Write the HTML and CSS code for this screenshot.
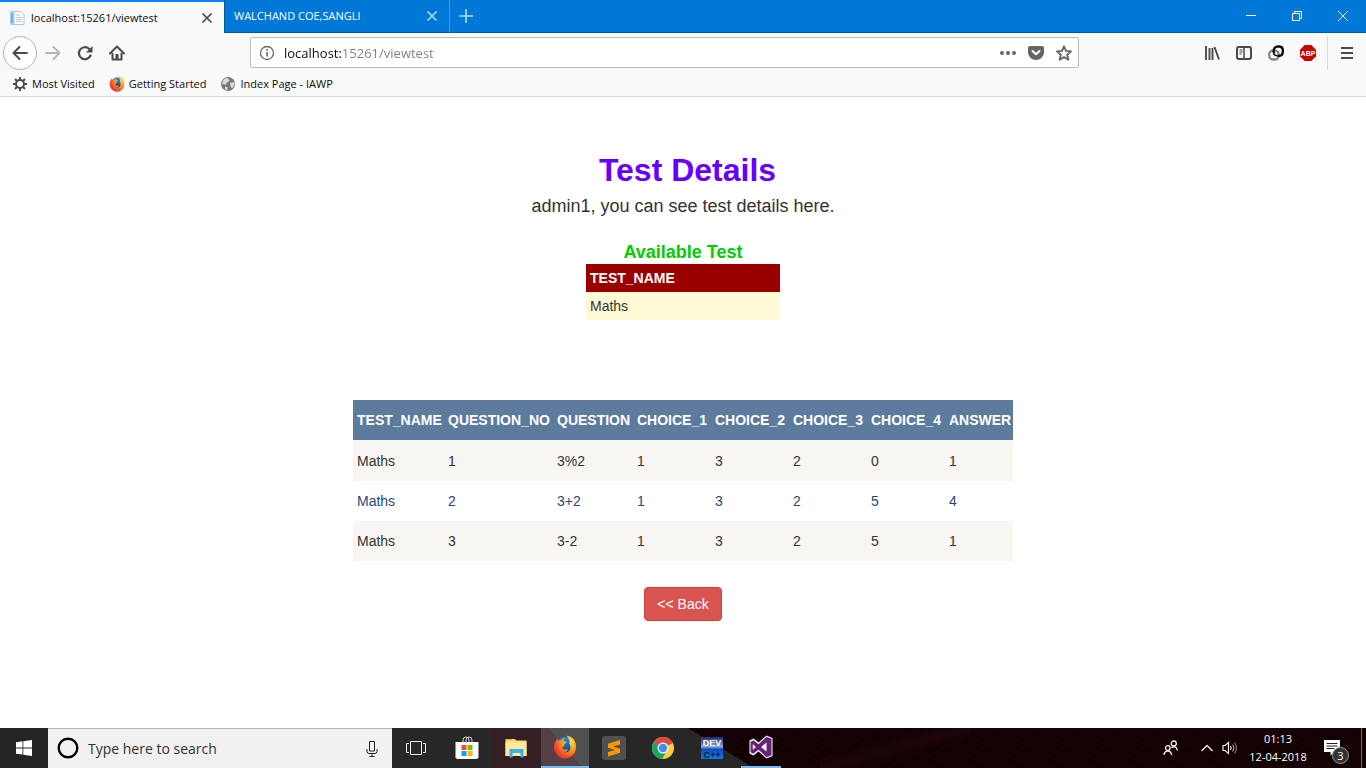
FILE: index.html
```html
<!DOCTYPE html>
<html lang="en">
<head>
<meta charset="utf-8">
<title>localhost:15261/viewtest</title>
<link rel="stylesheet" href="styles.css">
</head>
<body>
<svg class="defs" aria-hidden="true">
  <defs>
    <radialGradient id="fox" cx="0.75" cy="0.25" r="0.95">
      <stop offset="0" stop-color="#ffe14a"/><stop offset="0.4" stop-color="#ff9a1a"/><stop offset="0.75" stop-color="#f2452a"/><stop offset="1" stop-color="#d81f4a"/>
    </radialGradient>
    <linearGradient id="sea" x1="0" y1="0" x2="0" y2="1">
      <stop offset="0" stop-color="#1a8fe0"/><stop offset="1" stop-color="#1d3f9c"/>
    </linearGradient>
    <linearGradient id="dev" x1="0" y1="0" x2="0" y2="1">
      <stop offset="0" stop-color="#1c2a6c"/><stop offset="0.45" stop-color="#8fa6dc"/><stop offset="0.55" stop-color="#0a50b8"/><stop offset="1" stop-color="#1478e6"/>
    </linearGradient>
    <symbol id="firefox" viewBox="0 0 24 24">
      <circle cx="12" cy="10" r="8" fill="url(#sea)"/>
      <path d="M3 5.500L4 3.500l1.500 2L8 5.300c1.300-1.700 3-2 4-1.800-1 .8-1.500 1.800-1.300 2.700l3 .6c.2 1-1.400 1.500-2.200 2.200l-.5 2.200c-1.500.3-2 1.600-1 2.800 1.500 1.400 3 .2 5 .7-1 2-3 2.500-4.500 2.300 4 1.500 7-.8 7-4.500 0-2.500-1-4-2-5l1.500.3C16.500 5 15 2.500 13.500.800 20 1 23.500 7 23 13c-.5 6-5 10.500-11 10.500S1 18.500 1 12.500C1 9.500 1.800 7 3 5.500z" fill="url(#fox)"/>
    </symbol>
  </defs>
</svg>

<header class="browser">
  <div class="tabbar">
    <div class="tab tab-active">
      <svg class="favicon" viewBox="0 0 16 16" aria-hidden="true"><path d="M1 1h5v14H1z" fill="#a9d3f2"/><path d="M2 3h2v10H2z" fill="#6fb1e4"/><path d="M5 1.500h7l3 3v10H5z" fill="#f7f9fb" stroke="#b9c3cc"/><path d="M7 5h4M7 7.500h6M7 9.500h6M7 11.500h6" stroke="#b8cfe2"/></svg>
      <span class="tab-title">localhost:15261/viewtest</span>
      <button class="tab-close" aria-label="Close tab"><svg width="12" height="12" viewBox="0 0 12 12"><path d="M1.500 1.500l9 9M10.500 1.500l-9 9" stroke="#4a4a4a" stroke-width="1.700"/></svg></button>
    </div>
    <div class="tab tab-idle">
      <span class="tab-title">WALCHAND COE,SANGLI</span>
      <button class="tab-close" aria-label="Close tab"><svg width="12" height="12" viewBox="0 0 12 12"><path d="M1.500 1.500l9 9M10.500 1.500l-9 9" stroke="#b9dcf7" stroke-width="1.500"/></svg></button>
    </div>
    <button class="tab-new" aria-label="New tab"><svg width="16" height="16" viewBox="0 0 16 16"><path d="M8 1v14M1 8h14" stroke="#b9dcf7" stroke-width="1.600"/></svg></button>
    <div class="window-buttons">
      <button aria-label="Minimize"><svg width="10" height="10" viewBox="0 0 10 10"><path d="M0 4.500h10" stroke="#fff"/></svg></button>
      <button aria-label="Restore"><svg width="10" height="10" viewBox="0 0 10 10"><path d="M.5 2.500h7v7h-7zM2.500 2.500v-2h7v7h-2" fill="none" stroke="#fff"/></svg></button>
      <button aria-label="Close"><svg width="10" height="10" viewBox="0 0 10 10"><path d="M0 0l10 10M10 0L0 10" stroke="#fff"/></svg></button>
    </div>
  </div>

  <div class="toolbar">
    <div class="nav-buttons">
      <button class="back" aria-label="Go back"><svg width="16" height="16" viewBox="0 0 16 16"><path d="M15 8H1.500M7.500 2L1.500 8l6 6" fill="none" stroke="#4a4a4b" stroke-width="2" stroke-linecap="round" stroke-linejoin="round"/></svg></button>
      <button aria-label="Go forward"><svg width="16" height="16" viewBox="0 0 16 16"><path d="M1 8h13.500M8.500 2l6 6-6 6" fill="none" stroke="#b5b5b5" stroke-width="2" stroke-linecap="round" stroke-linejoin="round"/></svg></button>
      <button aria-label="Reload"><svg width="16" height="16" viewBox="0 0 16 16"><path d="M13.500 10.500A6 6 0 1 1 12 3.800" fill="none" stroke="#4a4a4b" stroke-width="2.200" stroke-linecap="round"/><path d="M15.500 1v6.500H9z" fill="#4a4a4b"/></svg></button>
      <button aria-label="Home"><svg width="16" height="16" viewBox="0 0 16 16"><path d="M1 8.500L8 1.500l7 7" fill="none" stroke="#4a4a4b" stroke-width="2" stroke-linecap="round" stroke-linejoin="round"/><path d="M3.500 8v6.500h9V8" fill="none" stroke="#4a4a4b" stroke-width="2" stroke-linejoin="round"/><path d="M6.500 9h3v5h-3z" fill="#4a4a4b"/></svg></button>
    </div>
    <div class="urlbar">
      <svg width="16" height="16" viewBox="0 0 16 16" aria-hidden="true"><circle cx="8" cy="8" r="6.500" fill="none" stroke="#666" stroke-width="1.300"/><path d="M8 7v4.500M8 4v1.700" stroke="#666" stroke-width="1.600"/></svg>
      <input class="url" type="text" value="localhost:15261/viewtest" aria-label="Address">
      <button aria-label="Page actions"><svg width="16" height="16" viewBox="0 0 16 16" fill="#666"><circle cx="2" cy="8" r="2"/><circle cx="8" cy="8" r="2"/><circle cx="14" cy="8" r="2"/></svg></button>
      <button aria-label="Save to Pocket"><svg width="16" height="16" viewBox="0 0 16 16"><path d="M2 1h12a2 2 0 0 1 2 2v4.500a8 7.500 0 0 1-16 0V3a2 2 0 0 1 2-2z" fill="#666"/><path d="M4.500 6L8 9.300 11.500 6" fill="none" stroke="#fff" stroke-width="2" stroke-linecap="round" stroke-linejoin="round"/></svg></button>
      <button aria-label="Bookmark this page"><svg width="16" height="16" viewBox="0 0 16 16"><path d="M8 1.300l2 4.600 5 .5-3.800 3.300 1.200 5L8 12.100l-4.400 2.600 1.200-5L1 6.400l5-.5z" fill="none" stroke="#666" stroke-width="1.900" stroke-linejoin="round"/></svg></button>
    </div>
    <div class="tool-buttons">
      <button aria-label="Library"><svg width="16" height="16" viewBox="0 0 16 16"><path d="M2 1v14M5.500 3v12M8.500 3v12M10.500 2l4.500 12.500" fill="none" stroke="#4a4a4b" stroke-width="1.900"/></svg></button>
      <button aria-label="Sidebars"><svg width="16" height="16" viewBox="0 0 16 16"><rect x="1" y="2" width="14" height="12" rx="2" fill="none" stroke="#4a4a4b" stroke-width="2"/><path d="M8 2v12" stroke="#4a4a4b" stroke-width="1.500"/><path d="M3.500 5h3M3.500 7h3M3.500 9h2" stroke="#4a4a4b"/></svg></button>
      <button aria-label="Link extension"><svg width="16" height="16" viewBox="0 0 16 16" fill="none" stroke-width="2.300"><rect x="1.200" y="5.500" width="9.500" height="9" rx="4" stroke="#85858a"/><path d="M6 8.500q-1-3 .2-5Q7.500 1.500 9.500 1.500h2q3.300.3 3.300 3.500v2q0 3.500-3.500 3.800H9.500" stroke="#0b0b0b"/><path d="M5.500 8.500q1 2.200 4 2.200" stroke="#0b0b0b" stroke-width="1.500"/></svg></button>
      <button aria-label="Adblock Plus"><svg width="16" height="16" viewBox="0 0 16 16"><path d="M4.700 0h6.600L16 4.700v6.600L11.300 16H4.700L0 11.300V4.700z" fill="#cc0000"/><text class="abp" x="8" y="10.700" text-anchor="middle">ABP</text></svg></button>
      <button class="menu" aria-label="Open menu"><svg width="16" height="16" viewBox="0 0 16 16"><path d="M2 3h12M2 8h12M2 13h12" stroke="#4a4a4b" stroke-width="2"/></svg></button>
    </div>
  </div>

  <nav class="bookmarks">
    <a href="#"><svg width="16" height="16" viewBox="0 0 16 16"><circle cx="8" cy="8" r="4" fill="none" stroke="#4a4a4b" stroke-width="2"/><path d="M8 1v3M8 12v3M1 8h3M12 8h3M3 3l2 2M11 11l2 2M13 3l-2 2M5 11l-2 2" stroke="#4a4a4b" stroke-width="2"/></svg>Most Visited</a>
    <a href="#"><svg width="16" height="16"><use href="#firefox"/></svg>Getting Started</a>
    <a href="#"><svg width="16" height="16" viewBox="0 0 16 16"><circle cx="8" cy="8" r="7" fill="#77787a"/><path d="M3 4l3-2 3 1 .5 2L7 6.500 5.500 9 3.500 8 2 9zM10 7l4-1 .5 3-2.500 3.500-1.500-2zM5 10.500l3 1-1 3-2-1z" fill="#d8d8d8"/></svg>Index Page - IAWP</a>
  </nav>
</header>

<main class="page">
  <h1 class="title">Test Details</h1>
  <p class="intro">admin1, you can see test details here.</p>
  <h2 class="subtitle" id="available">Available Test</h2>
  <table class="available" aria-labelledby="available">
    <thead><tr><th>TEST_NAME</th></tr></thead>
    <tbody><tr><td>Maths</td></tr></tbody>
  </table>
  <table class="questions" aria-label="Questions">
    <colgroup><col class="c-name"><col class="c-number"><col class="c-question"><col class="c-choice"><col class="c-choice"><col class="c-choice"><col class="c-choice"><col class="c-answer"></colgroup>
    <thead><tr><th>TEST_NAME</th><th>QUESTION_NO</th><th>QUESTION</th><th>CHOICE_1</th><th>CHOICE_2</th><th>CHOICE_3</th><th>CHOICE_4</th><th>ANSWER</th></tr></thead>
    <tbody>
      <tr><td>Maths</td><td>1</td><td>3%2</td><td>1</td><td>3</td><td>2</td><td>0</td><td>1</td></tr>
      <tr><td>Maths</td><td>2</td><td>3+2</td><td>1</td><td>3</td><td>2</td><td>5</td><td>4</td></tr>
      <tr><td>Maths</td><td>3</td><td>3-2</td><td>1</td><td>3</td><td>2</td><td>5</td><td>1</td></tr>
    </tbody>
  </table>
  <button class="btn-back">&lt;&lt; Back</button>
</main>

<footer class="taskbar">
  <button class="start" aria-label="Start"><svg width="16" height="16" viewBox="0 0 16 16" fill="#fff"><path d="M0 2.200l6.500-.9v6.200H0zM7.300 1.200L16 0v7.500H7.300zM0 8.400h6.500v6.200L0 13.700zM7.300 8.400H16V16l-8.700-1.200z"/></svg></button>
  <label class="search">
    <svg width="24" height="24" viewBox="0 0 24 24"><circle cx="12" cy="11" r="9.300" fill="none" stroke="#000" stroke-width="2.400"/></svg>
    <input type="text" placeholder="Type here to search" aria-label="Type here to search">
    <svg width="12" height="18" viewBox="0 0 12 18" fill="none" stroke="#222"><path d="M3.500 1.500h5v9.500h-5zM1 9v2.500q0 2 2 2h6q2 0 2-2V9M6 13.500v3M3.500 16.500h5"/></svg>
  </label>
  <div class="apps">
    <button aria-label="Task view"><svg width="20" height="16" viewBox="0 0 20 16" fill="none" stroke="#eee"><path d="M4.500 1.500h11v13h-11zM3 3.500H.5v9H3M17 3.500h2.500v9H17"/></svg></button>
    <button class="app-store" aria-label="Store"><svg width="24" height="24" viewBox="0 0 24 24"><path d="M8 7V4a3 3 0 0 1 6 0v3M11 7V4a3 3 0 0 1 6 0v3" fill="none" stroke="#ddd"/><path d="M.5 6h23v15.500l-1.500 1.500H2L.5 21.500z" fill="#fff"/><path d="M6.500 9h5v5h-5z" fill="#f25022"/><path d="M12.500 9h5v5h-5z" fill="#7fba00"/><path d="M6.500 15h5v5h-5z" fill="#00a4ef"/><path d="M12.500 15h5v5h-5z" fill="#ffb900"/></svg></button>
    <button class="app-explorer" aria-label="File Explorer"><svg width="24" height="24" viewBox="0 0 24 24"><path d="M1.500 3h9l2 1.500h10V20h-21z" fill="#ffd96a"/><path d="M1.500 6h21v14h-21z" fill="#ffe9a0"/><path d="M2.500 3.500h5" stroke="#e8a33d"/><path d="M5.500 21.500V13h14v8.500h-3V17h-8v4.500z" fill="#3bb0e8"/></svg></button>
    <button class="app-firefox" aria-label="Firefox"><svg width="24" height="24"><use href="#firefox"/></svg></button>
    <button aria-label="Sublime Text"><svg width="24" height="24" viewBox="0 0 24 24"><path d="M0 1.500L1.500 0h21L24 1.500v21L22.500 24h-21L0 22.500z" fill="#505050"/><path d="M18 4v4.500l-7 2 7 2.300v4L6 20.500V16l7-2-7-2.300v-4z" fill="#ff9800"/></svg></button>
    <button aria-label="Chrome"><svg width="24" height="24" viewBox="0 0 24 24"><circle cx="12" cy="12" r="11" fill="#ffcd40"/><path d="M12 12L2.500 6.500A11 11 0 0 1 21.900 7z" fill="#dd4b3e"/><path d="M2.500 6.500A11 11 0 0 0 11 23l5.500-9L12 12z" fill="#1da462"/><path d="M2.500 6.500L7.600 15 12 12z" fill="#1da462"/><path d="M12 7h9.900q-.4-1-1-2L12 4z" fill="#dd4b3e"/><circle cx="12" cy="12" r="5.500" fill="#fff"/><circle cx="12" cy="12" r="4.300" fill="#4a8af4"/></svg></button>
    <button aria-label="Dev-C++"><svg width="24" height="24" viewBox="0 0 24 24"><path d="M1 1h22v22H1z" fill="url(#dev)"/><text class="dev-top" x="12" y="10" text-anchor="middle">DEV</text><text class="dev-bottom" x="12" y="22" text-anchor="middle">C++</text></svg></button>
    <button class="app-vs" aria-label="Visual Studio"><svg width="24" height="24" viewBox="0 0 24 24"><path d="M17.500 0.500L23.500 3v18l-6 2.500-8-7-5 4L0.500 18.500v-13L4.500 3.500l5 4z" fill="#fff"/><path d="M17.500 1.800l5 2v16.400l-5 2-8-7.500-5 4-3-1.500V6.700l3-1.500 5 4zM17.500 7.500L12 12l5.500 4.500zM3.800 9v6l3-3z" fill="#68217a" fill-rule="evenodd"/></svg></button>
  </div>
  <div class="tray">
    <button class="tray-people" aria-label="People"><svg width="16" height="16" viewBox="0 0 16 16" fill="none" stroke="#eee" stroke-width="1.300"><circle cx="4.800" cy="8" r="2.300"/><path d="M1 15q.5-4 3.800-4t3.800 4"/><circle cx="10.800" cy="3.500" r="2.500"/><path d="M8.500 8q2.500-2.500 5 0l1 2.500"/></svg></button>
    <button class="tray-more" aria-label="Show hidden icons"><svg width="12" height="8" viewBox="0 0 12 8"><path d="M.5 7L6 1.500 11.500 7" fill="none" stroke="#eee" stroke-width="1.300"/></svg></button>
    <button class="tray-sound" aria-label="Volume"><svg width="16" height="14" viewBox="0 0 16 14" fill="none" stroke="#eee" stroke-width="1.200"><path d="M1 4.500h2L6.500 1.500v11L3 9.500H1z"/><path d="M8.500 5q1.500 2 0 4"/><path d="M10.500 3.500q2.500 3.500 0 7" stroke="#999"/><path d="M12.500 1.500q4 5.500 0 11" stroke="#777"/></svg></button>
    <div class="clock"><span>01:13</span><span>12-04-2018</span></div>
    <button class="notices" aria-label="Notifications"><svg width="16" height="16" viewBox="0 0 16 16"><path d="M0 0h16v12h-6l-3.500 3.500V12H0z" fill="#fff"/><path d="M2.500 3.500h11M2.500 6h11M2.500 8.500h8" stroke="#222"/></svg><span class="badge">3</span></button>
  </div>
</footer>
</body>
</html>
```
FILE: styles.css
```css
* { box-sizing: border-box; }

body {
  margin: 0;
  min-height: 100vh;
  display: flex;
  flex-direction: column;
  background: #fff;
  color: #333;
  font: 14px/20px "Liberation Sans", Arial, sans-serif;
}

button {
  padding: 0;
  border: 0;
  background: none;
  color: inherit;
  font: inherit;
  display: flex;
  align-items: center;
  justify-content: center;
}

svg { display: block; flex: none; }
.defs { position: absolute; width: 0; height: 0; }

/* Browser chrome */
.browser {
  background: #f9f9fa;
  border-bottom: 1px solid #dcdcdc;
  color: #0c0c0d;
  font: 12px/16px "Open Sans", sans-serif;
}

.tabbar { display: flex; height: 33px; background: #0078d7; }
.tab { display: flex; align-items: center; width: 225px; padding: 0 9px; }
.tab-active { width: 224px; gap: 6px; background: #f9f9fa; border-top: 2px solid #0a84ff; }
.tab-idle { color: #fff; border: solid #005a9e; border-width: 0 0 1px 1px; }
.tab-title { flex: 1; white-space: nowrap; font-size: 11px; }
.favicon { width: 16px; height: 16px; }
.tab-close { width: 16px; height: 16px; }
.tab-new { width: 33px; border: solid #4ba0e3; border-width: 0 0 1px 1px; border-bottom-color: #005a9e; }
.window-buttons {
  flex: 1;
  display: flex;
  justify-content: flex-end;
  border-bottom: 1px solid #005a9e;
}
.window-buttons button { width: 46px; }

.toolbar { display: flex; align-items: center; height: 39px; }
.nav-buttons { display: flex; align-items: center; margin: 0 117px 0 3px; }
.nav-buttons button { width: 32px; height: 34px; }
.nav-buttons .back { width: 34px; background: #fff; border: 1px solid #b5b5b5; border-radius: 50%; }
.urlbar {
  flex: 1;
  display: flex;
  align-items: center;
  height: 31px;
  padding: 0 0 0 8px;
  background: #fff;
  border: 1px solid #bcbcbc;
  border-radius: 2px;
}
.urlbar button { width: 28px; height: 28px; }
.url {
  flex: 1;
  min-width: 0;
  height: 28px;
  padding: 1px 0 0 9px;
  border: 0;
  outline: 0;
  font: 13px/20px "Open Sans", sans-serif;
  color: transparent;
  background: linear-gradient(90deg, #0c0c0d 67px, #7c7c7c 67px);
  -webkit-background-clip: text;
  background-clip: text;
}
.tool-buttons { display: flex; align-items: center; margin-left: 117px; }
.tool-buttons button { width: 32px; height: 34px; }
.tool-buttons .menu { width: 39px; margin-left: 3px; border-left: 1px solid #dcdcdc; }
.abp { font: bold 7px "Liberation Sans", sans-serif; fill: #fff; }

.bookmarks { display: flex; gap: 14px; height: 24px; padding: 0 12px; }
.bookmarks a {
  display: flex;
  align-items: center;
  gap: 4px;
  color: #0c0c0d;
  font-size: 11px;
  text-decoration: none;
  white-space: nowrap;
}

/* Page content */
.page {
  flex: 1;
  display: flex;
  flex-direction: column;
  align-items: center;
  padding-top: 53px;
}
.title { margin: 0; padding-left: 9px; color: #6600ff; font-size: 32px; line-height: 40px; }
.intro { margin: 6px 0 0; font-size: 18px; line-height: 20px; }
.subtitle { margin: 26px 0 0; color: #00cc00; font-size: 18px; line-height: 20px; }

table { border-collapse: collapse; table-layout: fixed; text-align: left; }
th, td { padding: 4px; white-space: nowrap; }
.available { width: 194px; margin-top: 2px; }
.available th { background: #990000; color: #fff; }
.available td { background: #fffbd6; }

.questions { width: 660px; margin-top: 80px; }
.questions th, .questions td { height: 40px; }
.questions th { background: #5d7b9d; color: #fff; }
.questions td { background: #f7f6f3; }
.questions tbody tr:first-child td { height: 41px; }
.questions tbody tr:nth-child(2) td { background: #fff; color: #284775; }
.c-name { width: 91px; }
.c-number { width: 109px; }
.c-question { width: 80px; }
.c-choice { width: 78px; }
.c-answer { width: 68px; }

.btn-back {
  margin-top: 26px;
  padding: 6px 12px;
  border: 1px solid #d43f3a;
  border-radius: 4px;
  background: #d9534f;
  color: #fff;
}

/* Taskbar */
.taskbar {
  display: flex;
  height: 40px;
  color: #fff;
  font: 12px/18px "Open Sans", sans-serif;
  background:
    linear-gradient(#272727, #272727) 0 0 / 688px 40px no-repeat,
    linear-gradient(to top right, #272727 50%, transparent 50%) 688px 0 / 66px 40px no-repeat,
    linear-gradient(to bottom right, transparent 35%, #1e0508 50%, transparent 65%) 820px 0 / 150px 40px no-repeat,
    repeating-linear-gradient(150deg, #120203 0 8px, #170304 8px 10px);
}
.start { width: 48px; background: #252525; }
.search {
  display: flex;
  align-items: center;
  gap: 8px;
  width: 344px;
  padding: 0 14px 0 8px;
  background: #f1f1f1;
  border-top: 1px solid #b4b4b4;
}
.search input {
  flex: 1;
  min-width: 0;
  padding: 0;
  border: 0;
  outline: 0;
  background: none;
  font: 14px/20px "Open Sans", sans-serif;
}
.search input::placeholder { color: #333; opacity: 1; }
.apps { display: flex; gap: 1px; }
.apps button { width: 48px; }
.apps .app-store { width: 50px; padding-left: 2px; }
.app-explorer { background: #351f22; }
.apps .app-firefox { background: linear-gradient(50deg, #553f43 50%, #525152 50%); border-bottom: 2px solid #76b9ed; }
.apps .app-vs { width: 40px; margin-left: 4px; border-bottom: 2px solid #76b9ed; }
.dev-top { font: bold 9px "Liberation Sans", sans-serif; fill: #fff; }
.dev-bottom { font: bold 9px "Liberation Sans", sans-serif; fill: #041a3c; }

.tray { display: flex; align-items: stretch; margin-left: auto; padding-right: 4px; }
.tray-people { width: 32px; margin-right: 8px; }
.tray-more { width: 24px; }
.tray-sound { width: 22px; }
.clock {
  display: flex;
  flex-direction: column;
  justify-content: center;
  align-items: center;
  width: 74px;
  font-size: 11px;
}
.notices { position: relative; width: 47px; padding-right: 12px; border-right: 1px solid #75686a; }
.badge {
  position: absolute;
  right: 12px;
  bottom: 4px;
  width: 17px;
  height: 17px;
  border: 1px solid #999;
  border-radius: 50%;
  background: #333;
  font-size: 11px;
  line-height: 15px;
  text-align: center;
}
```
